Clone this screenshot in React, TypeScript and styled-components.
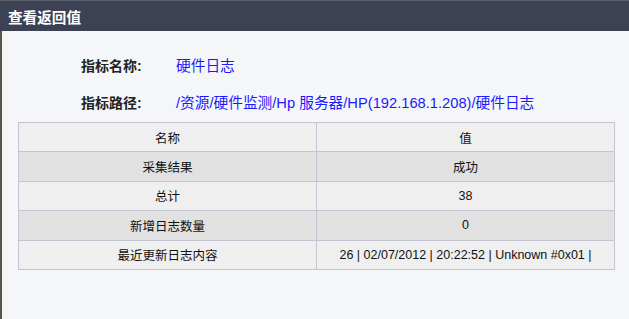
import styled, { createGlobalStyle } from "styled-components";

const GlobalStyle = createGlobalStyle`
  html, body {
    margin: 0;
    padding: 0;
    background: #f5f6f8;
  }
  body {
    font-family: "Liberation Sans", "Noto Sans CJK SC", sans-serif;
  }
`;

const Dialog = styled.div`
  width: 629px;
  height: 319px;
  display: flex;
  flex-direction: column;
  overflow: hidden;
`;

const TitleBar = styled.div`
  height: 31px;
  box-sizing: border-box;
  background: #3c4253;
  border-top: 1px solid #5b606c;
  display: flex;
  align-items: center;
  padding-left: 8px;
  color: #ffffff;
  font-size: 14.6px;
  font-weight: bold;
`;

const Body = styled.div`
  flex: 1;
  background: #f5f6f8;
  border-left: 2px solid #55564a;
  padding: 24px 14px 0 16px;
`;

const Info = styled.div`
  padding-left: 63px;
  display: flex;
  flex-direction: column;
  gap: 18px;
  margin-bottom: 11px;
`;

const InfoRow = styled.div`
  display: flex;
  align-items: center;
  height: 19px;
`;

const Label = styled.span`
  width: 95px;
  font-size: 14px;
  font-weight: bold;
  color: #222222;
`;

const Value = styled.span`
  font-size: 14.7px;
  color: #1a1aff;
`;

const Table = styled.table`
  width: 597px;
  border-collapse: collapse;
  table-layout: fixed;
  font-size: 12.5px;
  color: #111111;
`;

const Row = styled.tr<{ $alt?: boolean }>`
  height: 29.4px;
  background: ${(p) => (p.$alt ? "#e1e1e1" : "#efefef")};
`;

const Cell = styled.td`
  border: 1px solid #c3c3d1;
  text-align: center;
  padding: 0;
`;

const HeadCell = styled.th`
  border: 1px solid #c3c3d1;
  text-align: center;
  font-weight: normal;
  padding: 0;
`;

export default function App() {
  const rows = [
    { name: "采集结果", value: "成功" },
    { name: "总计", value: "38" },
    { name: "新增日志数量", value: "0" },
    { name: "最近更新日志内容", value: "26 | 02/07/2012 | 20:22:52 | Unknown #0x01 |" },
  ];

  return (
    <Dialog>
      <GlobalStyle />
      <TitleBar>查看返回值</TitleBar>
      <Body>
        <Info>
          <InfoRow>
            <Label>指标名称:</Label>
            <Value>硬件日志</Value>
          </InfoRow>
          <InfoRow>
            <Label>指标路径:</Label>
            <Value>/资源/硬件监测/Hp 服务器/HP(192.168.1.208)/硬件日志</Value>
          </InfoRow>
        </Info>
        <Table>
          <thead>
            <Row>
              <HeadCell>名称</HeadCell>
              <HeadCell>值</HeadCell>
            </Row>
          </thead>
          <tbody>
            {rows.map((r, i) => (
              <Row key={i} $alt={i % 2 === 0}>
                <Cell>{r.name}</Cell>
                <Cell>{r.value}</Cell>
              </Row>
            ))}
          </tbody>
        </Table>
      </Body>
    </Dialog>
  );
}
